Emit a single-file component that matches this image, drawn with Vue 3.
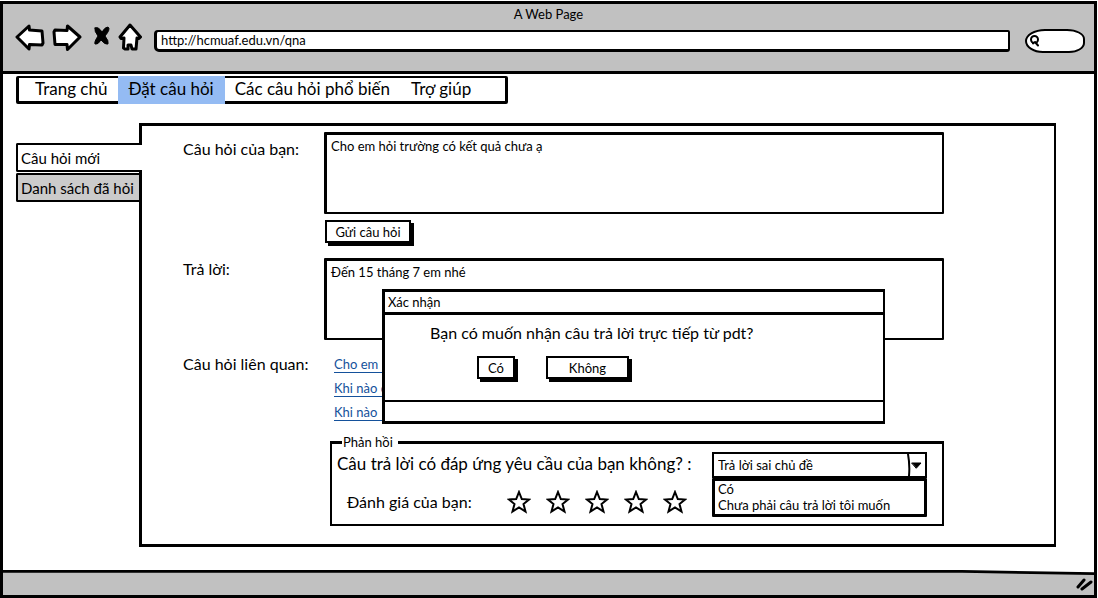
<script setup>
import { ref } from 'vue'

const address = ref('http://hcmuaf.edu.vn/qna')
const search = ref('')
const question = ref('Cho em hỏi trường có kết quả chưa ạ')
const answer = ref('Đến 15 tháng 7 em nhé')
const reason = ref('Trả lời sai chủ đề')

const menu = [
  { text: 'Trang chủ' },
  { text: 'Đặt câu hỏi', active: true },
  { text: 'Các câu hỏi phổ biến' },
  { text: 'Trợ giúp' },
]
const related = ['Cho em', 'Khi nào có', 'Khi nào']
const options = ['Có', 'Chưa phải câu trả lời tôi muốn']
</script>

<template>
  <div class="window">
    <header class="chrome">
      <div class="title">A Web Page</div>
      <div class="toolbar">
        <button class="tool" aria-label="Back">
          <svg width="30" height="28" viewBox="0 0 30 28"><path d="M2 14 L14 3 L14.500 7 L27 8 L28 20 L27 22 L14.500 21.500 L14 26 Z" /></svg>
        </button>
        <button class="tool forward" aria-label="Forward">
          <svg width="30" height="28" viewBox="0 0 30 28"><path d="M28 14 L15.500 3 L15 7.500 L3 7 L2 9 L3 21.500 L15 21.500 L15.500 26.500 Z" /></svg>
        </button>
        <button class="tool stop" aria-label="Stop">
          <svg width="18" height="20" viewBox="0 0 18 20"><path class="solid" d="M2 2 Q5 0 9 6 Q12 1 15 1 Q18 3 12 10 Q16 15 15 18 Q12 19 8 14 Q5 19 2 18 Q1 16 5 10 Q1 5 2 2 Z" /></svg>
        </button>
        <button class="tool home" aria-label="Home">
          <svg width="24" height="28" viewBox="0 0 24 28"><path d="M12 2 L2 14 L3 15.500 L6 15 L5.500 25 L7 26 L10 26 L10 22 L13 22 L14 26 L18 26 L19 15 L21 15.500 L22.500 14 Z" /></svg>
        </button>
        <input v-model="address" class="address" type="text" aria-label="Address" />
        <label class="search">
          <svg width="12" height="12" viewBox="0 0 12 12"><circle cx="5.500" cy="4.500" r="3.500" /><path d="M4 8.500 L6 7 L9 10.500" /></svg>
          <input v-model="search" type="text" aria-label="Search" />
        </label>
      </div>
    </header>

    <main class="page">
      <nav class="menu">
        <a v-for="item in menu" :key="item.text" href="#" :class="{ active: item.active }">{{ item.text }}</a>
      </nav>

      <div class="layout">
        <aside class="tabs">
          <a href="#" class="tab current">Câu hỏi mới</a>
          <a href="#" class="tab">Danh sách đã hỏi</a>
        </aside>

        <section class="panel">
          <label class="label" for="question">Câu hỏi của bạn:</label>
          <div class="ask">
            <textarea id="question" v-model="question" class="area"></textarea>
            <button class="btn">Gửi câu hỏi</button>
          </div>

          <label class="label" for="answer">Trả lời:</label>
          <textarea id="answer" v-model="answer" class="area" readonly></textarea>

          <div class="label">Câu hỏi liên quan:</div>
          <div class="related">
            <a v-for="(link, i) in related" :key="i" href="#">{{ link }}</a>
          </div>

          <fieldset class="feedback">
            <legend>Phản hồi</legend>
            <div class="prompts">
              <label class="prompt" for="reason">Câu trả lời có đáp ứng yêu cầu của bạn không? :</label>
              <div class="rating">
                <span>Đánh giá của bạn:</span>
                <div class="stars">
                  <button v-for="n in 5" :key="n" class="star" :aria-label="n + ' sao'">
                    <svg width="24" height="24" viewBox="0 0 24 24"><path d="M12 2 L14.800 9 L22 9.500 L16.500 14 L18.500 21.500 L12 17.500 L5.500 21.500 L7.500 14 L2 9.500 L9.200 9 Z" /></svg>
                  </button>
                </div>
              </div>
            </div>
            <div class="combo">
              <div class="picker">
                <select id="reason" v-model="reason">
                  <option>{{ 'Trả lời sai chủ đề' }}</option>
                  <option v-for="o in options" :key="o">{{ o }}</option>
                </select>
                <svg class="arrow" width="18" height="22" viewBox="0 0 18 22"><path class="rule" d="M1 0 Q3 11 2 22" /><path d="M5 9 L14 9 L9.500 14 Z" /></svg>
              </div>
              <ul class="options" role="listbox" aria-label="Lựa chọn">
                <li v-for="o in options" :key="o" role="option">{{ o }}</li>
              </ul>
            </div>
          </fieldset>

          <div class="dialog" role="dialog" aria-labelledby="dialog-title">
            <div id="dialog-title" class="dialog-title">Xác nhận</div>
            <div class="dialog-body">
              <p>Bạn có muốn nhận câu trả lời trực tiếp từ pdt?</p>
              <div class="dialog-actions">
                <button class="btn yes">Có</button>
                <button class="btn no">Không</button>
              </div>
            </div>
            <div class="dialog-foot"></div>
          </div>
        </section>
      </div>
    </main>

    <footer class="status">
      <svg class="edge" viewBox="0 0 1092 27" preserveAspectRatio="none"><path d="M-4 1.500 L960 1.500 L1096 4 L1096 30 L-4 30 Z" /></svg>
      <svg class="grip" width="18" height="14" viewBox="0 0 18 14"><path d="M2 10 L8 3 M6 12 L15 5" /></svg>
    </footer>
  </div>
</template>

<style>
body {
  margin: 0;
  background: #fff;
}
</style>

<style scoped>
.window,
.window * {
  box-sizing: border-box;
}
.window {
  display: flex;
  flex-direction: column;
  min-height: calc(100vh - 2px);
  margin: 1px 1px 1px 0;
  border: 3px solid #000;
  font-family: Lato, "Noto Sans", sans-serif;
  font-size: 16px;
  line-height: 20px;
  color: #000;
}
button,
input,
select,
textarea {
  margin: 0;
  padding: 0;
  border: 0;
  background: none;
  font: inherit;
  color: inherit;
}
svg {
  display: block;
  fill: #fff;
  stroke: #000;
  stroke-width: 3;
  stroke-linejoin: round;
  stroke-linecap: round;
}
a {
  color: inherit;
  text-decoration: none;
}
.chrome {
  height: 70px;
  background: #c1c1c1;
  border-bottom: 3px solid #000;
}
.title {
  font-size: 13px;
  text-align: center;
}
.toolbar {
  display: flex;
  align-items: center;
  padding: 0 9px 0 12px;
  height: 26px;
}
.forward {
  margin-left: 7px;
}
.stop {
  margin-left: 11px;
}
.stop svg {
  margin-bottom: 3px;
}
.home {
  margin-left: 7px;
}
.solid {
  fill: #000;
  stroke-width: 1;
}
.address {
  flex: 1;
  min-width: 0;
  height: 22px;
  margin: 8px 15px 0 12px;
  padding: 0 4px 2px;
  background: #fff;
  border: solid #000;
  border-width: 2px 2px 3px 3px;
  border-radius: 4px 2px 3px 5px;
  font-size: 13px;
}
.search {
  display: flex;
  align-items: center;
  width: 60px;
  height: 24px;
  margin-top: 8px;
  padding-left: 2px;
  background: #fff;
  border: 2px solid #000;
  border-radius: 20px 18px 16px 18px / 12px 10px 10px 12px;
}
.search svg {
  stroke-width: 2;
}
.search input {
  flex: 1;
  min-width: 0;
}
.page {
  flex: 1;
  padding: 2px 38px 23px 13px;
}
.menu {
  display: flex;
  width: 492px;
  height: 28px;
  padding-left: 6px;
  border: solid #000;
  border-width: 2px 3px 3px 3px;
  border-radius: 2px;
  font-size: 17px;
}
.menu a {
  padding: 1px 11px 0 10px;
}
.menu a.active {
  margin: -2px 0 -3px;
  padding-top: 3px;
  background: #94bbf3;
}
.layout {
  display: flex;
  margin-top: 19px;
}
.tabs {
  z-index: 1;
  display: flex;
  flex-direction: column;
  gap: 1px;
  width: 126px;
  margin: 20px -3px 0 0;
  font-size: 15px;
}
.tab {
  height: 29px;
  margin-right: 3px;
  padding: 3px 0 0 3px;
  background: #cbcbcb;
  border: solid #000;
  border-width: 2px 0 2px 2px;
  border-radius: 2px 0 0 2px;
  white-space: nowrap;
}
.tab.current {
  margin-right: 0;
  background: #fff;
}
.panel {
  position: relative;
  flex: 1;
  display: grid;
  grid-template-columns: 141px 1fr;
  align-items: start;
  padding: 6px 110px 18px 41px;
  border: solid #000;
  border-width: 3px 2px 3px 3px;
}
.label {
  padding-top: 7px;
}
.label[for='answer'] {
  padding-top: 1px;
}
.area {
  display: block;
  width: 100%;
  height: 82px;
  padding: 1px 4px;
  border: solid #000;
  border-width: 3px 2px 2px 3px;
  border-radius: 1px;
  font-size: 13px;
  line-height: 20px;
  resize: none;
}
.btn {
  height: 23px;
  padding: 0 8px;
  background: #fff;
  border: 2px solid #000;
  box-shadow: 3px 3px 0 #000;
  font-size: 13px;
  line-height: 18px;
}
.ask .btn {
  width: 86px;
  margin: 6px 0 15px 1px;
}
.related {
  display: flex;
  flex-direction: column;
  align-items: flex-start;
  gap: 7px;
  padding: 16px 0 0 10px;
  font-size: 13px;
  line-height: 16px;
  color: #14519b;
}
.related a {
  min-width: 60px;
  border-bottom: 1px solid #14519b;
}
div.label {
  padding-top: 14px;
}
.feedback {
  grid-column: 2;
  display: flex;
  justify-content: space-between;
  min-width: 0;
  margin: 11px 0 0 6px;
  padding: 0 15px 7px 5px;
  border: solid #000;
  border-width: 3px 2px 2px 2px;
}
.feedback legend {
  margin-left: 5px;
  padding: 0 5px 0 1px;
  font-size: 13px;
}
.prompts {
  flex: 1;
  display: flex;
  flex-direction: column;
  gap: 16px;
  padding-top: 2px;
}
.prompt {
  font-size: 17px;
}
.rating {
  display: flex;
  align-items: center;
  padding-left: 10px;
}
.rating span {
  width: 160px;
}
.stars {
  display: flex;
  gap: 15px;
}
.star svg {
  stroke-width: 2;
  stroke-linejoin: miter;
}
.combo {
  width: 215px;
  font-size: 13px;
}
.picker {
  position: relative;
  height: 26px;
  border: 2px solid #000;
}
.picker select {
  appearance: none;
  width: 100%;
  height: 22px;
  padding-left: 4px;
}
.arrow {
  position: absolute;
  top: 0;
  right: 0;
  fill: #000;
  stroke-width: 1;
  pointer-events: none;
}
.arrow .rule {
  fill: none;
  stroke-width: 2;
}
.options {
  margin: 0;
  padding: 0 3px 1px;
  border: 3px solid #000;
  border-radius: 1px;
  list-style: none;
  line-height: 16px;
}
.dialog {
  position: absolute;
  top: 163px;
  left: 240px;
  right: 169px;
  background: #fff;
  border: solid #000;
  border-width: 3px 2px 3px 3px;
}
.dialog-title {
  height: 23px;
  padding-left: 3px;
  border-bottom: 3px solid #000;
  font-size: 13px;
}
.dialog-body {
  height: 85px;
  padding: 8px 0 0 45px;
}
.dialog-body p {
  margin: 0;
}
.dialog-actions {
  display: flex;
  gap: 31px;
  padding: 13px 0 0 47px;
}
.yes {
  width: 38px;
}
.no {
  width: 83px;
}
.dialog-foot {
  height: 21px;
  border-top: 2px solid #000;
}
.status {
  position: relative;
  display: flex;
  justify-content: flex-end;
  align-items: center;
  height: 25px;
}
.edge {
  position: absolute;
  inset: 0;
  width: 100%;
  height: 100%;
  fill: #c1c1c1;
}
.grip {
  position: relative;
  margin: 2px 0 0;
}
</style>
